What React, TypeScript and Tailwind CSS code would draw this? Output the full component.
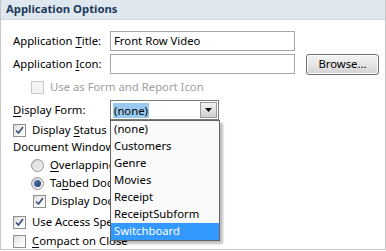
import type { ReactNode } from 'react'

const font = { fontFamily: '"Noto Sans", "Open Sans", sans-serif' }

const formNames = ['(none)', 'Customers', 'Genre', 'Movies', 'Receipt', 'ReceiptSubform', 'Switchboard']

function Key({ children }: { children: ReactNode }) {
  return <span className="underline decoration-1 underline-offset-2">{children}</span>
}

function CheckBox({ checked = false, disabled = false }: { checked?: boolean; disabled?: boolean }) {
  return (
    <span
      className={[
        'flex h-[13px] w-[13px] shrink-0 items-center justify-center border',
        disabled
          ? 'border-[#c8c8c8] bg-[#f4f4f4]'
          : 'border-[#8f8f8f] bg-gradient-to-br from-[#dcdcdc] via-[#f4f4f4] to-white',
      ].join(' ')}
    >
      {checked ? (
        <svg width="9" height="9" viewBox="0 0 9 9">
          <path d="M1 4.5 L3.5 7 L8 1" fill="none" stroke="#3c4f7a" strokeWidth="1.7" />
        </svg>
      ) : null}
    </span>
  )
}

function Radio({ checked = false }: { checked?: boolean }) {
  return (
    <span className="flex h-[13px] w-[13px] shrink-0 items-center justify-center rounded-full border border-[#8f8f8f] bg-gradient-to-br from-[#d6d6d6] to-[#f8f8f8]">
      {checked ? (
        <span className="h-[7px] w-[7px] rounded-full bg-gradient-to-br from-[#5a7fb5] to-[#1b3a6b]" />
      ) : (
        <span className="h-[7px] w-[7px] rounded-full bg-[#e4e4e4]" />
      )}
    </span>
  )
}

function Label({ children }: { children: ReactNode }) {
  return <span className="w-[97px] shrink-0 whitespace-nowrap">{children}</span>
}

export default function App() {
  return (
    <div className="h-[251px] w-[386px] overflow-hidden bg-white text-[11.3px] text-black" style={font}>
      <div className="relative h-[250px] w-[386px] border-x border-b border-[#c6c6c6]">
        <div className="flex h-[20px] items-center border-b border-[#cfd8e2] bg-[#dfe7ef] pl-[5px] text-[11.3px] font-bold text-[#1e395b]">
          Application Options
        </div>

        <div className="pl-[12px]">
          <div className="mt-[11px] flex h-[20px] items-center">
            <Label>
              Application <Key>T</Key>itle:
            </Label>
            <div className="flex h-[20px] w-[185px] items-center border border-[#a5a5a5] pl-[3px]">Front Row Video</div>
          </div>

          <div className="mt-[3px] flex h-[20px] items-center">
            <Label>
              Application <Key>I</Key>con:
            </Label>
            <div className="h-[20px] w-[185px] border border-[#a5a5a5]" />
            <button className="ml-[11px] h-[21px] w-[73px] rounded-[3px] border border-[#707070] bg-gradient-to-b from-[#f3f3f3] via-[#e6e6e6] to-[#d2d2d2] text-[11.3px] leading-none shadow-[inset_0_0_0_1px_#fcfcfc]">
              Browse...
            </button>
          </div>

          <div className="mt-[3px] flex h-[20px] items-center pl-[18px] text-[#a0a0a0]">
            <CheckBox disabled />
            <span className="ml-[6px] whitespace-nowrap">Use as Form and Report Icon</span>
          </div>

          <div className="mt-[3px] flex h-[20px] items-center">
            <Label>
              <Key>D</Key>isplay Form:
            </Label>
            <div className="flex h-[20px] w-[109px] items-center border border-[#7a7a7a] pl-[2px]">
              <span className="bg-[#99c9ef] px-px leading-[15px]">(none)</span>
              <span className="ml-auto mr-px flex h-[16px] w-[17px] items-center justify-center border border-[#9a9a9a] bg-gradient-to-b from-[#f2f2f2] to-[#cfcfcf]">
                <svg width="7" height="4" viewBox="0 0 7 4">
                  <path d="M0 0 H7 L3.5 4 Z" fill="#111" />
                </svg>
              </span>
            </div>
          </div>

          <div className="mt-px flex h-[18px] items-center">
            <CheckBox checked />
            <span className="ml-[6px] whitespace-nowrap">
              Display <Key>S</Key>tatus Bar
            </span>
          </div>

          <div className="flex h-[17px] items-center whitespace-nowrap">Document Window Options</div>

          <div className="flex h-[18px] items-center pl-[18px]">
            <Radio />
            <span className="ml-[6px] whitespace-nowrap">
              <Key>O</Key>verlapping Windows
            </span>
          </div>

          <div className="flex h-[18px] items-center pl-[18px]">
            <Radio checked />
            <span className="ml-[6px] whitespace-nowrap">
              Ta<Key>b</Key>bed Documents
            </span>
          </div>

          <div className="flex h-[18px] items-center pl-[20px]">
            <CheckBox checked />
            <span className="ml-[5px] whitespace-nowrap">Display Document Tabs</span>
          </div>

          <div className="mt-[2px] flex h-[20px] items-center">
            <CheckBox checked />
            <span className="ml-[6px] whitespace-nowrap">Use Access Special Keys</span>
          </div>

          <div className="flex h-[18px] items-center">
            <CheckBox />
            <span className="ml-[6px] whitespace-nowrap">
              <Key>C</Key>ompact on Close
            </span>
          </div>
        </div>

        {/* open drop-down list of the Display Form box */}
        <ul className="absolute left-[109px] top-[120px] w-[110px] border border-[#646464] bg-[#fafafa] shadow-[3px_3px_2px_rgba(0,0,0,0.25)]">
          {formNames.map((name) => (
            <li
              key={name}
              className={[
                'flex h-[17px] items-center whitespace-nowrap pl-[3px]',
                name === 'Switchboard' ? 'bg-[#3399ff] text-white' : '',
              ].join(' ')}
            >
              {name}
            </li>
          ))}
        </ul>
      </div>
    </div>
  )
}
